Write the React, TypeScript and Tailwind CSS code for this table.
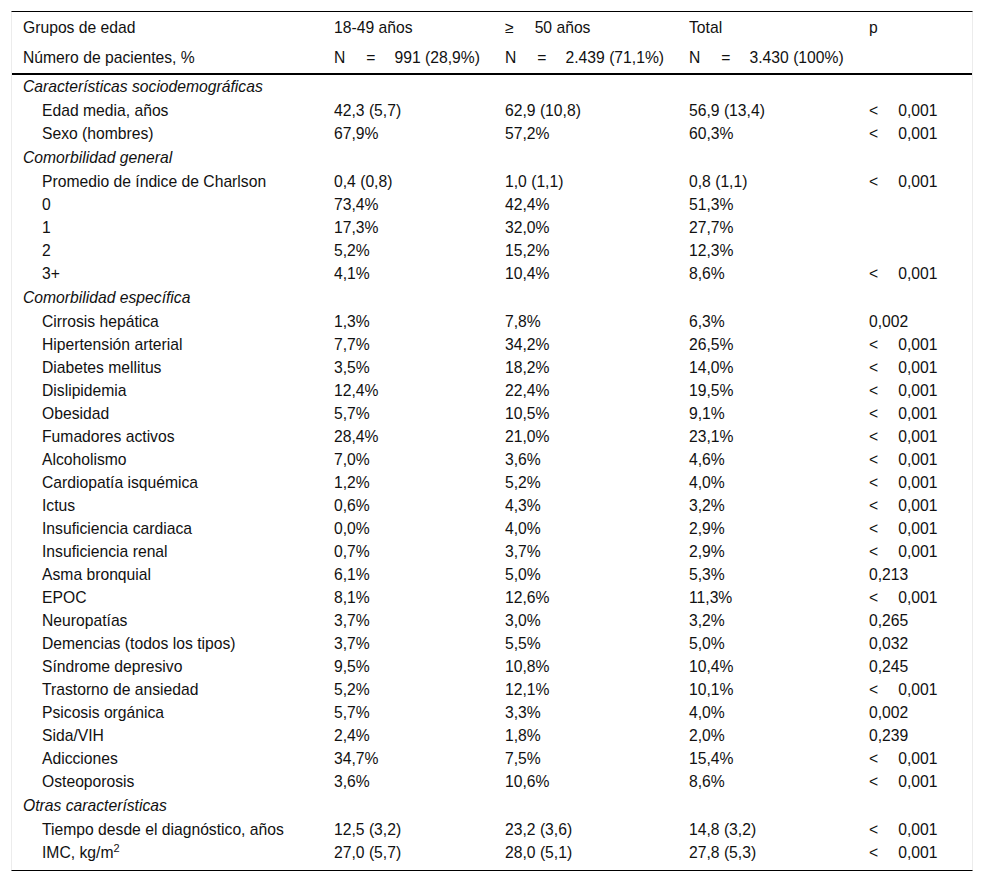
import React from 'react'

type Row =
  | { kind: 'cat'; label: string }
  | { kind: 'data'; label: React.ReactNode; a: string; b: string; t: string; p?: string }

const rows: Row[] = [
  { kind: 'cat', label: 'Características sociodemográficas' },
  { kind: 'data', label: 'Edad media, años', a: '42,3 (5,7)', b: '62,9 (10,8)', t: '56,9 (13,4)', p: '<0,001' },
  { kind: 'data', label: 'Sexo (hombres)', a: '67,9%', b: '57,2%', t: '60,3%', p: '<0,001' },
  { kind: 'cat', label: 'Comorbilidad general' },
  { kind: 'data', label: 'Promedio de índice de Charlson', a: '0,4 (0,8)', b: '1,0 (1,1)', t: '0,8 (1,1)', p: '<0,001' },
  { kind: 'data', label: '0', a: '73,4%', b: '42,4%', t: '51,3%' },
  { kind: 'data', label: '1', a: '17,3%', b: '32,0%', t: '27,7%' },
  { kind: 'data', label: '2', a: '5,2%', b: '15,2%', t: '12,3%' },
  { kind: 'data', label: '3+', a: '4,1%', b: '10,4%', t: '8,6%', p: '<0,001' },
  { kind: 'cat', label: 'Comorbilidad específica' },
  { kind: 'data', label: 'Cirrosis hepática', a: '1,3%', b: '7,8%', t: '6,3%', p: '0,002' },
  { kind: 'data', label: 'Hipertensión arterial', a: '7,7%', b: '34,2%', t: '26,5%', p: '<0,001' },
  { kind: 'data', label: 'Diabetes mellitus', a: '3,5%', b: '18,2%', t: '14,0%', p: '<0,001' },
  { kind: 'data', label: 'Dislipidemia', a: '12,4%', b: '22,4%', t: '19,5%', p: '<0,001' },
  { kind: 'data', label: 'Obesidad', a: '5,7%', b: '10,5%', t: '9,1%', p: '<0,001' },
  { kind: 'data', label: 'Fumadores activos', a: '28,4%', b: '21,0%', t: '23,1%', p: '<0,001' },
  { kind: 'data', label: 'Alcoholismo', a: '7,0%', b: '3,6%', t: '4,6%', p: '<0,001' },
  { kind: 'data', label: 'Cardiopatía isquémica', a: '1,2%', b: '5,2%', t: '4,0%', p: '<0,001' },
  { kind: 'data', label: 'Ictus', a: '0,6%', b: '4,3%', t: '3,2%', p: '<0,001' },
  { kind: 'data', label: 'Insuficiencia cardiaca', a: '0,0%', b: '4,0%', t: '2,9%', p: '<0,001' },
  { kind: 'data', label: 'Insuficiencia renal', a: '0,7%', b: '3,7%', t: '2,9%', p: '<0,001' },
  { kind: 'data', label: 'Asma bronquial', a: '6,1%', b: '5,0%', t: '5,3%', p: '0,213' },
  { kind: 'data', label: 'EPOC', a: '8,1%', b: '12,6%', t: '11,3%', p: '<0,001' },
  { kind: 'data', label: 'Neuropatías', a: '3,7%', b: '3,0%', t: '3,2%', p: '0,265' },
  { kind: 'data', label: 'Demencias (todos los tipos)', a: '3,7%', b: '5,5%', t: '5,0%', p: '0,032' },
  { kind: 'data', label: 'Síndrome depresivo', a: '9,5%', b: '10,8%', t: '10,4%', p: '0,245' },
  { kind: 'data', label: 'Trastorno de ansiedad', a: '5,2%', b: '12,1%', t: '10,1%', p: '<0,001' },
  { kind: 'data', label: 'Psicosis orgánica', a: '5,7%', b: '3,3%', t: '4,0%', p: '0,002' },
  { kind: 'data', label: 'Sida/VIH', a: '2,4%', b: '1,8%', t: '2,0%', p: '0,239' },
  { kind: 'data', label: 'Adicciones', a: '34,7%', b: '7,5%', t: '15,4%', p: '<0,001' },
  { kind: 'data', label: 'Osteoporosis', a: '3,6%', b: '10,6%', t: '8,6%', p: '<0,001' },
  { kind: 'cat', label: 'Otras características' },
  { kind: 'data', label: 'Tiempo desde el diagnóstico, años', a: '12,5 (3,2)', b: '23,2 (3,6)', t: '14,8 (3,2)', p: '<0,001' },
  {
    kind: 'data',
    label: (
      <>
        IMC, kg/m<sup className="text-[11px] relative -top-[6px]">2</sup>
      </>
    ),
    a: '27,0 (5,7)',
    b: '28,0 (5,1)',
    t: '27,8 (5,3)',
    p: '<0,001',
  },
]

const cols = 'grid grid-cols-[311px_171px_184px_180px_114px]'

function NCount({ value }: { value: string }) {
  return (
    <span className="whitespace-nowrap">
      N<span className="ml-[21px]">=</span>
      <span className="ml-[19px]">{value}</span>
    </span>
  )
}

function PValue({ p }: { p?: string }) {
  if (!p) return null
  if (p.startsWith('<')) {
    return (
      <span className="whitespace-nowrap">
        &lt;<span className="ml-[20px]">{p.slice(1)}</span>
      </span>
    )
  }
  return <span>{p}</span>
}

export default function App() {
  return (
    <div className="min-h-screen bg-white pt-[11px] pl-[11px] text-[15.7px] leading-none text-[#111] font-['Liberation_Sans',Arial,sans-serif]">
      <div className="w-[962px] border-t border-b border-black border-x border-x-[#ececec]">
        {/* header */}
        <div className={`${cols} h-[32px] items-center`}>
          <div className="pl-[11px]">Grupos de edad</div>
          <div className="pl-[11px]">18-49 años</div>
          <div className="pl-[11px]">
            ≥<span className="ml-[21px]">50 años</span>
          </div>
          <div className="pl-[11px]">Total</div>
          <div className="pl-[11px]">p</div>
        </div>
        <div className={`${cols} h-[31px] pb-[1px] items-center border-b-2 border-black`}>
          <div className="pl-[11px]">Número de pacientes, %</div>
          <div className="pl-[11px]">
            <NCount value="991 (28,9%)" />
          </div>
          <div className="pl-[11px]">
            <NCount value="2.439 (71,1%)" />
          </div>
          <div className="pl-[11px]">
            <NCount value="3.430 (100%)" />
          </div>
          <div />
        </div>

        {/* body */}
        <div className="pb-[6px]">
          {rows.map((row, i) =>
            row.kind === 'cat' ? (
              <div
                key={i}
                className={`${i === 0 ? 'h-[24px]' : 'h-[25px]'} flex items-center pl-[11px] italic`}
              >
                {row.label}
              </div>
            ) : (
              <div key={i} className={`${cols} h-[23px] items-center`}>
                <div className="pl-[30px]">{row.label}</div>
                <div className="pl-[11px]">{row.a}</div>
                <div className="pl-[11px]">{row.b}</div>
                <div className="pl-[11px]">{row.t}</div>
                <div className="pl-[11px]">
                  <PValue p={row.p} />
                </div>
              </div>
            )
          )}
        </div>
      </div>
    </div>
  )
}
